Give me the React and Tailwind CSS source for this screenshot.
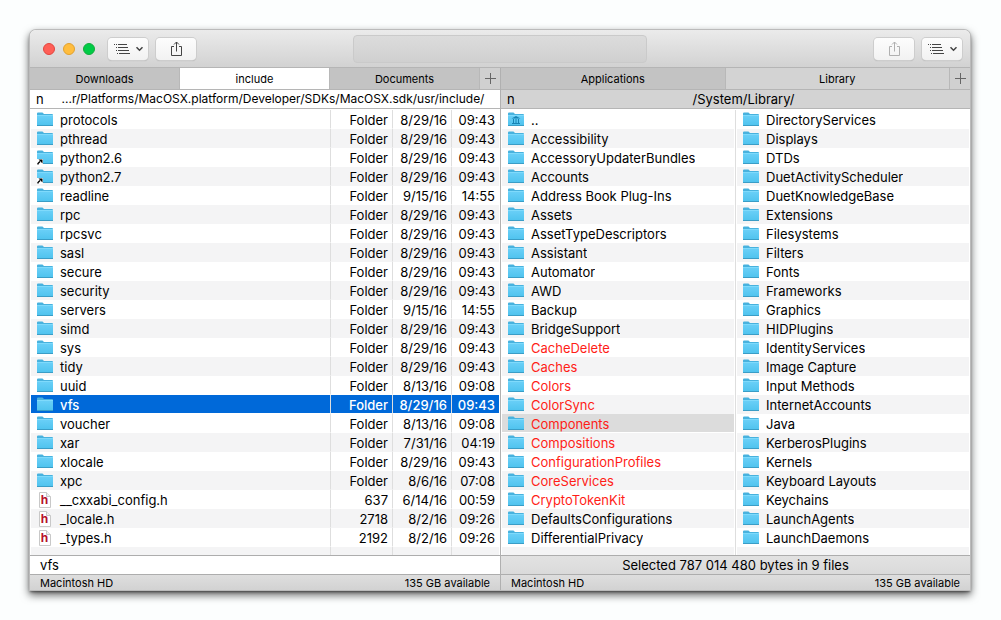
import React from 'react';
import clsx from 'clsx';

const leftFiles = [
  ['protocols', 'Folder', '8/29/16', '09:43'],
  ['pthread', 'Folder', '8/29/16', '09:43'],
  ['python2.6', 'Folder', '8/29/16', '09:43', 'link'],
  ['python2.7', 'Folder', '8/29/16', '09:43', 'link'],
  ['readline', 'Folder', '9/15/16', '14:55'],
  ['rpc', 'Folder', '8/29/16', '09:43'],
  ['rpcsvc', 'Folder', '8/29/16', '09:43'],
  ['sasl', 'Folder', '8/29/16', '09:43'],
  ['secure', 'Folder', '8/29/16', '09:43'],
  ['security', 'Folder', '8/29/16', '09:43'],
  ['servers', 'Folder', '9/15/16', '14:55'],
  ['simd', 'Folder', '8/29/16', '09:43'],
  ['sys', 'Folder', '8/29/16', '09:43'],
  ['tidy', 'Folder', '8/29/16', '09:43'],
  ['uuid', 'Folder', '8/13/16', '09:08'],
  ['vfs', 'Folder', '8/29/16', '09:43'],
  ['voucher', 'Folder', '8/13/16', '09:08'],
  ['xar', 'Folder', '7/31/16', '04:19'],
  ['xlocale', 'Folder', '8/29/16', '09:43'],
  ['xpc', 'Folder', '8/6/16', '07:08'],
  ['__cxxabi_config.h', '637', '6/14/16', '00:59', 'header'],
  ['_locale.h', '2718', '8/2/16', '09:26', 'header'],
  ['_types.h', '2192', '8/2/16', '09:26', 'header'],
];

const rightColumns = [
  [
    '..', 'Accessibility', 'AccessoryUpdaterBundles', 'Accounts', 'Address Book Plug-Ins', 'Assets',
    'AssetTypeDescriptors', 'Assistant', 'Automator', 'AWD', 'Backup', 'BridgeSupport', 'CacheDelete',
    'Caches', 'Colors', 'ColorSync', 'Components', 'Compositions', 'ConfigurationProfiles',
    'CoreServices', 'CryptoTokenKit', 'DefaultsConfigurations', 'DifferentialPrivacy',
  ],
  [
    'DirectoryServices', 'Displays', 'DTDs', 'DuetActivityScheduler', 'DuetKnowledgeBase', 'Extensions',
    'Filesystems', 'Filters', 'Fonts', 'Frameworks', 'Graphics', 'HIDPlugins', 'IdentityServices',
    'Image Capture', 'Input Methods', 'InternetAccounts', 'Java', 'KerberosPlugins', 'Kernels',
    'Keyboard Layouts', 'Keychains', 'LaunchAgents', 'LaunchDaemons',
  ],
];

const marked = [
  'CacheDelete', 'Caches', 'Colors', 'ColorSync', 'Components', 'Compositions',
  'ConfigurationProfiles', 'CoreServices', 'CryptoTokenKit',
];

function FileIcon({ kind }) {
  if (kind === 'header') {
    return (
      <svg className="size-4 shrink-0" viewBox="0 0 16 16" aria-hidden="true">
        <path d="M2.500 .5h7l4 4v11h-11z" fill="#fff" stroke="#c8c8c8" />
        <path d="M9.500 .5v4h4" fill="#eee" stroke="#c8c8c8" />
        <text x="7.600" y="12" textAnchor="middle" fontSize="12" fontWeight="700" fill="#b5122b">h</text>
      </svg>
    );
  }
  return (
    <svg className="size-4 shrink-0" viewBox="0 0 16 16" aria-hidden="true">
      <defs>
        <linearGradient id="folder-face" x1="0" y1="0" x2="0" y2="1">
          <stop offset="0" stopColor="#6bd0f8" />
          <stop offset="1" stopColor="#4fc3ee" />
        </linearGradient>
      </defs>
      <path d="M0 1.500a1 1 0 0 1 1-1h4.500L7 2h8a1 1 0 0 1 1 1V14H0z" fill="#48b2de" />
      <path d="M0 3h16v10.500H0z" fill="url(#folder-face)" />
      <path d="M0 3.500h16" stroke="#7fdafb" />
      <path d="M0 13.500h16" stroke="#3a9dc6" />
      {kind === 'library' && (
        <path d="M3.500 6.500L8 4l4.500 2.500zM5 7h1v4H5zM7.500 7h1v4h-1zM10 7h1v4h-1zM4 11h8v1H4z" fill="#1784b4" />
      )}
      {kind === 'link' && (
        <>
          <path d="M0 9h6v6H0z" fill="#fff" />
          <path d="M1 14.500v-1L3 11.500" stroke="#000" strokeWidth="1.400" fill="none" />
          <path d="M1.500 9.500H5.500v4z" fill="#000" />
        </>
      )}
    </svg>
  );
}

function ViewModeButton() {
  return (
    <button
      type="button"
      aria-label="View mode"
      className="flex h-[22px] w-10 items-center justify-center gap-1 rounded-sm bg-gradient-to-b from-[#fdfdfd] to-[#f2f2f2] shadow-[0_0_0_1px_#cdcdcd,0_1px_1px_#aaa]"
    >
      <svg width="18" height="10" viewBox="0 0 18 10" fill="none" stroke="#444" aria-hidden="true">
        <path d="M1 .5h1M3 .5h1M5 .5h9M3 3.500h1M5 3.500h10M3 6.500h1M5 6.500h11M4 9.500h1M6 9.500h11" />
      </svg>
      <svg width="9" height="6" viewBox="0 0 9 6" fill="none" stroke="#444" strokeWidth="1.500" aria-hidden="true">
        <path d="M1.500 1.200l3 3 3-3" />
      </svg>
    </button>
  );
}

function ShareButton({ disabled }) {
  return (
    <button
      type="button"
      aria-label="Share"
      disabled={disabled}
      className="flex h-[22px] w-10 items-center justify-center rounded-sm bg-gradient-to-b from-[#fdfdfd] to-[#f2f2f2] shadow-[0_0_0_1px_#cdcdcd,0_1px_1px_#aaa]"
    >
      <svg width="12" height="16" viewBox="0 0 12 16" fill="none" stroke={disabled ? '#b0b0b0' : '#444'} aria-hidden="true">
        <path d="M4 5.500H1.500v9h10v-9H9M6.500 10.500V1M4 3.500L6.500 1 9 3.500" />
      </svg>
    </button>
  );
}

function Tabs({ tabs, active, activeClass }) {
  return (
    <div className="flex h-[22px] border-b border-[#b5b5b5] text-[11px]">
      {tabs.map((tab) => (
        <button
          key={tab}
          type="button"
          className={clsx('min-w-0 flex-1 border-r border-[#b8b8b8]', tab === active ? activeClass : 'bg-[#c3c3c3]')}
        >
          {tab}
        </button>
      ))}
      <button type="button" aria-label="New tab" className="flex w-5 items-center justify-center bg-[#d0d0d0]">
        <svg width="11" height="11" viewBox="0 0 11 11" stroke="#666" aria-hidden="true">
          <path d="M0 5.500h11M5.500 0v11" />
        </svg>
      </button>
    </div>
  );
}

function PathBar({ path, className, textClass }) {
  return (
    <div className={clsx('flex h-[19px] items-center border-b border-[#b5b5b5] pl-1.5', className)}>
      <button type="button" aria-label="Sort by name" className="w-2.5 text-left">n</button>
      <span className={clsx('min-w-0 flex-1 text-center whitespace-nowrap', textClass)}>{path}</span>
    </div>
  );
}

function PaneFooter({ children, className }) {
  return (
    <>
      <div className={clsx('flex h-5 items-center border-y border-[#adadad] px-2.5', className)}>{children}</div>
      <div className="flex h-[15px] items-center justify-between bg-gradient-to-b from-[#dedede] to-[#d2d2d2] px-2.5 text-[11px] leading-[14px]">
        <span>Macintosh HD</span>
        <span>135 GB available</span>
      </div>
    </>
  );
}

function FileTable() {
  const cursor = 'vfs';
  return (
    <table className="w-full table-fixed border-separate border-spacing-0 leading-4">
      <colgroup>
        <col />
        <col className="w-[62px]" />
        <col className="w-[59px]" />
        <col className="w-12" />
      </colgroup>
      <tbody>
        {leftFiles.map(([name, size, date, time, kind], idx) => {
          const cell = clsx(
            'h-[19px] border-b p-0',
            name === cursor
              ? 'border-b-white bg-[#0069d9]'
              : idx % 2 ? 'border-b-[#f4f4f5] bg-[#f4f4f5]' : 'border-b-white'
          );
          return (
            <tr key={name} className={name === cursor ? 'font-medium text-white' : ''}>
              <td className={cell}>
                <div className="flex items-center gap-[7px] pt-0.5 pl-1.5">
                  <FileIcon kind={kind} />
                  <span>{name}</span>
                </div>
              </td>
              {[size, date, time].map((value, col) => (
                <td key={col} className={clsx(cell, 'border-l border-l-[#dedede] text-right')}>
                  <div className="pt-0.5 pr-1">{value}</div>
                </td>
              ))}
            </tr>
          );
        })}
        <tr className="bg-[#f4f4f5]">
          <td className="h-2 p-0" />
          <td className="border-l border-[#dedede] p-0" />
          <td className="border-l border-[#dedede] p-0" />
          <td className="border-l border-[#dedede] p-0" />
        </tr>
      </tbody>
    </table>
  );
}

function FileColumn({ names }) {
  return (
    <ul className="min-w-0 flex-1 px-px">
      {names.map((name, idx) => (
        <li
          key={name}
          className={clsx(
            'flex h-[19px] items-center gap-[7px] border-b pt-0.5 pl-1.5 leading-4',
            name === 'Components' ? 'border-white bg-[#dcdcdc]' : idx % 2 ? 'border-[#f4f4f5] bg-[#f4f4f5]' : 'border-white',
            marked.includes(name) && 'text-[#ff1d17]'
          )}
        >
          <FileIcon kind={name === '..' ? 'library' : undefined} />
          <span className="truncate">{name}</span>
        </li>
      ))}
      <li className="h-2 bg-[#f4f4f5]" />
    </ul>
  );
}

export default function App() {
  return (
    <div className="min-h-screen bg-[#fcfefe] py-[30px] pr-[31px] pl-[30px] font-['Inter',sans-serif] text-[13px] leading-[18px] text-black">
      <main className="overflow-hidden rounded-t-md bg-white shadow-[0_0_0_1px_#bbb,0_2px_3px_rgba(0,0,0,0.5),0_4px_8px_1px_rgba(0,0,0,0.6)]">
        <header className="flex h-[38px] items-center border-b border-[#b5b5b5] bg-gradient-to-b from-[#ebebeb] to-[#d2d2d2] px-2">
          <div className="flex flex-1 items-center">
            <div className="ml-[5px] flex gap-2">
              <button type="button" aria-label="Close" className="size-3 rounded-full border border-[#e2463f] bg-[#ff5f57]" />
              <button type="button" aria-label="Minimize" className="size-3 rounded-full border border-[#e1a12f] bg-[#ffbd3e]" />
              <button type="button" aria-label="Zoom" className="size-3 rounded-full border border-[#12ac3b] bg-[#00cb46]" />
            </div>
            <div className="ml-[13px] flex gap-2">
              <ViewModeButton />
              <ShareButton />
            </div>
          </div>
          <div className="h-7 w-[294px] rounded-sm border border-[#cacaca] bg-gradient-to-b from-[#dcdcdc] to-[#d0d0d0]" />
          <div className="flex flex-1 justify-end gap-2">
            <ShareButton disabled />
            <ViewModeButton />
          </div>
        </header>

        <div className="grid grid-cols-[calc(50%+1px)_1fr]">
          <section className="min-w-0 border-r border-[#b0b0b0]">
            <Tabs tabs={['Downloads', 'include', 'Documents']} active="include" activeClass="bg-white" />
            <PathBar path="...r/Platforms/MacOSX.platform/Developer/SDKs/MacOSX.sdk/usr/include/" textClass="text-xs" />
            <div className="px-px pt-px">
              <FileTable />
            </div>
            <PaneFooter>vfs</PaneFooter>
          </section>

          <section className="min-w-0">
            <Tabs tabs={['Applications', 'Library']} active="Library" activeClass="bg-[#d3d3d3]" />
            <PathBar path="/System/Library/" className="bg-[#d3d3d3]" />
            <div className="flex divide-x divide-[#dedede] pt-px">
              {rightColumns.map((names) => (
                <FileColumn key={names[0]} names={names} />
              ))}
            </div>
            <PaneFooter className="justify-center bg-gradient-to-b from-[#e2e2e2] to-[#dadada]">
              Selected 787 014 480 bytes in 9 files
            </PaneFooter>
          </section>
        </div>
      </main>
    </div>
  );
}
